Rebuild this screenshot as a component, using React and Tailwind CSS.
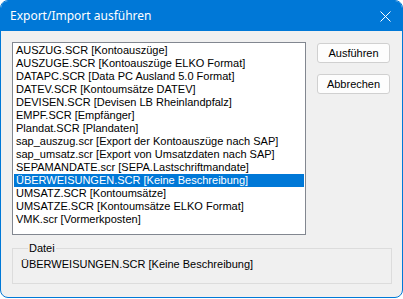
import React, { useState } from 'react';

const files = [
    'AUSZUG.SCR [Kontoauszüge]',
    'AUSZUGE.SCR [Kontoauszüge ELKO Format]',
    'DATAPC.SCR [Data PC Ausland 5.0 Format]',
    'DATEV.SCR [Kontoumsätze DATEV]',
    'DEVISEN.SCR [Devisen LB Rheinlandpfalz]',
    'EMPF.SCR [Empfänger]',
    'Plandat.SCR [Plandaten]',
    'sap_auszug.scr [Export der Kontoauszüge nach SAP]',
    'sap_umsatz.scr [Export von Umsatzdaten nach SAP]',
    'SEPAMANDATE.scr [SEPA.Lastschriftmandate]',
    'ÜBERWEISUNGEN.SCR [Keine Beschreibung]',
    'UMSATZ.SCR [Kontoumsätze]',
    'UMSATZE.SCR [Kontoumsätze ELKO Format]',
    'VMK.scr [Vormerkposten]',
];

const App = () => {
    const [selected, setSelected] = useState(10);

    return (
        <div className="w-[403px] h-[299px] bg-white font-['Liberation_Sans',Arial,sans-serif] text-[11px] text-black">
            <div className="flex flex-col h-[298px] border border-[#0078d7] rounded-lg overflow-hidden bg-[#f0f0f0]">
                <div className="flex items-center justify-between h-[30px] bg-[#0078d7] text-white shrink-0">
                    <span className="pl-[9px] text-[12px] font-['Noto_Sans',sans-serif]">Export/Import ausführen</span>
                    <svg width="11" height="11" viewBox="0 0 11 11" className="mr-[11px]">
                        <path d="M0.5 0.5 L10.5 10.5 M10.5 0.5 L0.5 10.5" stroke="white" strokeWidth="1" />
                    </svg>
                </div>

                <div className="flex-1 px-[11px] pt-[11px]">
                    <div className="flex gap-[11px]">
                        <ul className="w-[294px] h-[193px] bg-white border border-[#828790] p-px leading-[13px]">
                            {files.map((f, i) => (
                                <li
                                    key={f}
                                    onClick={() => setSelected(i)}
                                    className={`h-[13px] pl-[2px] whitespace-nowrap ${i === selected ? 'bg-[#0078d7] text-white' : ''}`}
                                >
                                    {f}
                                </li>
                            ))}
                        </ul>

                        <div className="flex flex-col gap-[11px] pt-px">
                            <button className="w-[73px] h-[20px] bg-[#fdfdfd] border border-[#d0d0d0] rounded-[3px] text-[11px]">
                                Ausführen
                            </button>
                            <button className="w-[73px] h-[20px] bg-[#fdfdfd] border border-[#d0d0d0] rounded-[3px] text-[11px]">
                                Abbrechen
                            </button>
                        </div>
                    </div>

                    <fieldset className="mt-[7px] w-[380px] h-[42px] border border-[#dcdcdc] pl-[8px]">
                        <legend className="ml-[7px] px-px leading-[13px]">Datei</legend>
                        <div className="pt-[3px] leading-[13px]">{files[selected]}</div>
                    </fieldset>
                </div>
            </div>
        </div>
    );
};

export default App;
